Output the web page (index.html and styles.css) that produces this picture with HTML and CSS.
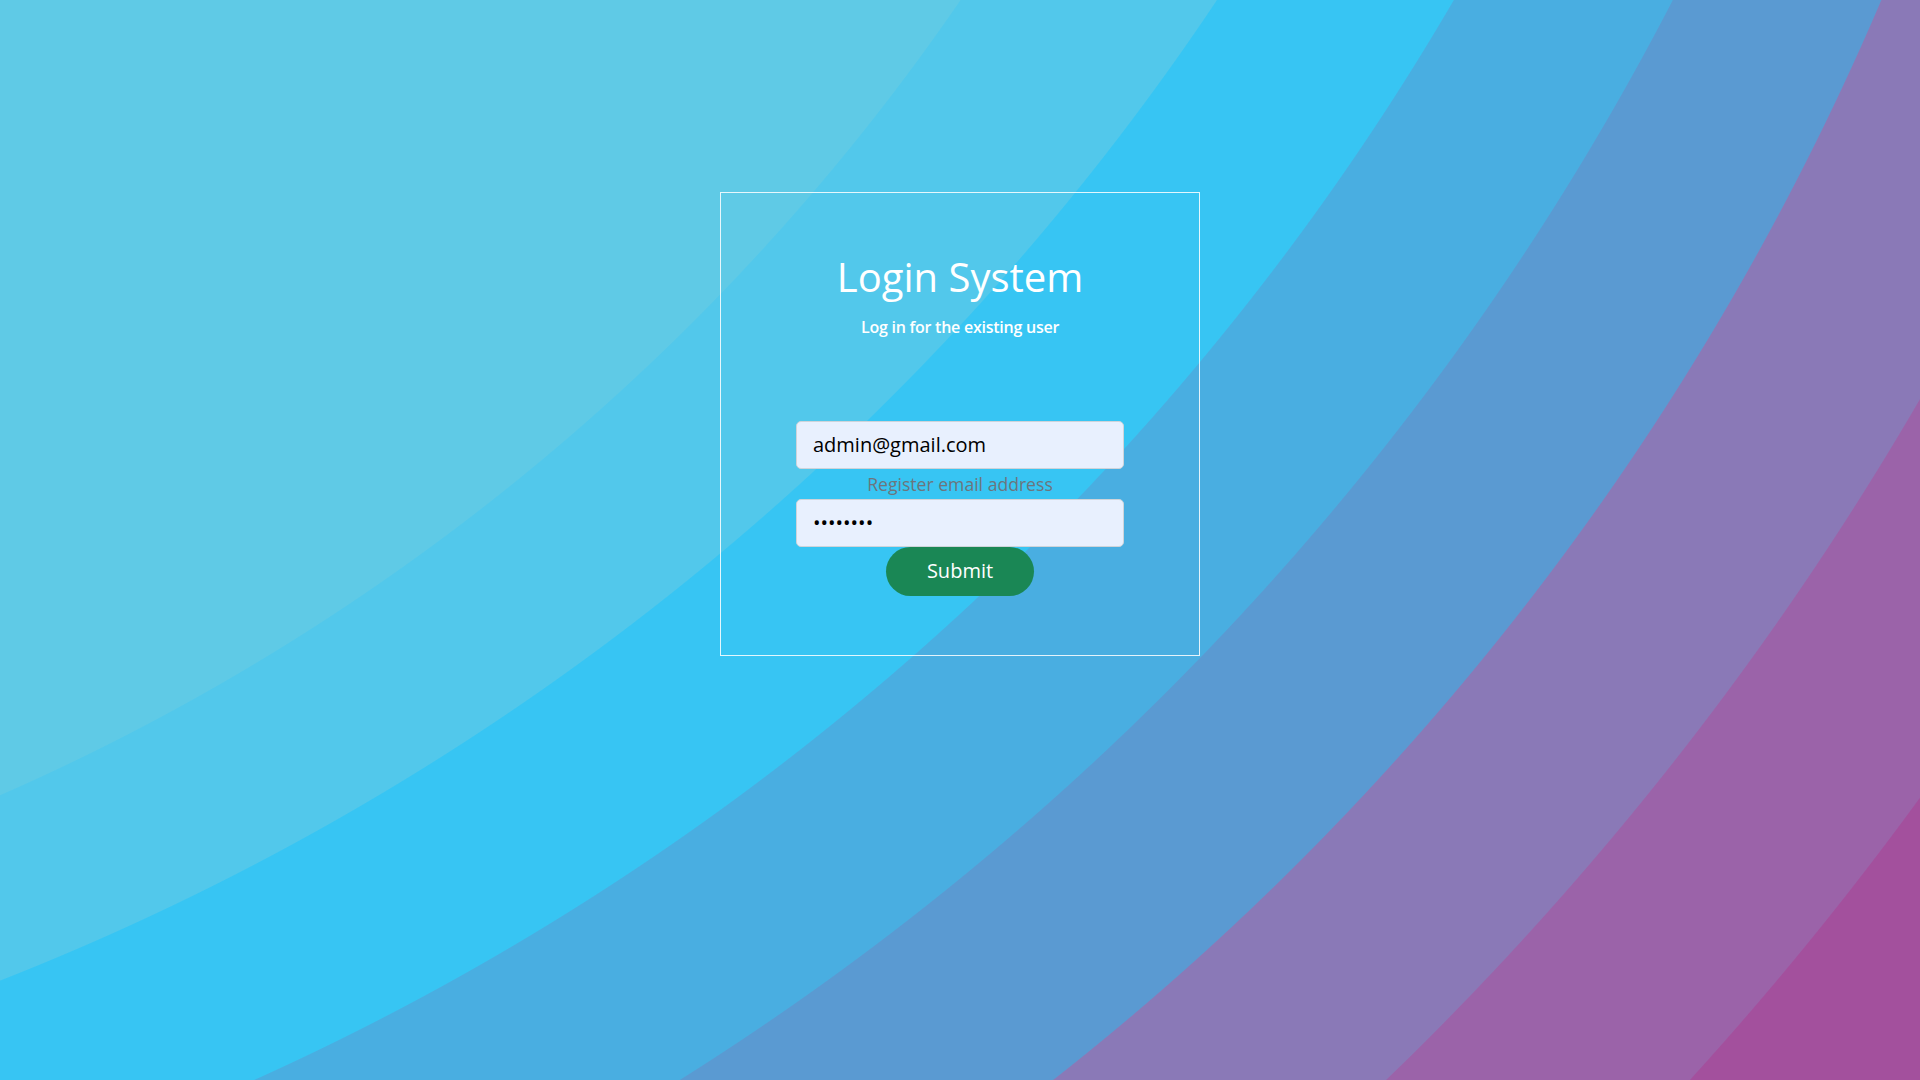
FILE: index.html
```html
<!DOCTYPE html>
<html lang="en">
<head>
<meta charset="utf-8">
<title>Login System</title>
<link rel="stylesheet" href="styles.css">
</head>
<body>
<div class="page">
  <div class="card">
    <h1 class="title">Login System</h1>
    <p class="subtitle">Log in for the existing user</p>
    <form class="form">
      <input class="field" type="email" value="admin@gmail.com">
      <small class="hint">Register email address</small>
      <input class="field" type="password" value="12345678">
      <button class="submit" type="button">Submit</button>
    </form>
  </div>
</div>
</body>
</html>
```
FILE: styles.css
```css
html, body {
  margin: 0;
  padding: 0;
}
body {
  font-family: "Open Sans", "Noto Sans", sans-serif;
  color: #212529;
}
.page {
  min-height: 100vh;
  box-sizing: border-box;
  padding-top: 192px;
  background-color: #a3509d;
  background-image:
    radial-gradient(circle 2271px at -912px -1284px, #5fcae6 2270px, rgba(95,202,230,0) 2271px),
    radial-gradient(circle 2612px at -955px -1450px, #52c8eb 2611px, rgba(82,200,235,0) 2612px),
    radial-gradient(circle 2648px at -833px -1334px, #37c5f3 2647px, rgba(55,197,243,0) 2648px),
    radial-gradient(circle 2789px at -804px -1281px, #49aee1 2788px, rgba(73,174,225,0) 2789px),
    radial-gradient(circle 2737px at -636px -1073px, #5a9ad2 2736px, rgba(90,154,210,0) 2737px),
    radial-gradient(circle 3130px at -786px -1173px, #8a79b7 3129px, rgba(138,121,183,0) 3130px),
    radial-gradient(circle 3348px at -786px -1173px, #9b63a9 3347px, rgba(155,99,169,0) 3348px);
  background-repeat: no-repeat;
}
.card {
  width: 480px;
  box-sizing: border-box;
  margin: 0 auto;
  border: 1px solid rgba(255, 255, 255, 0.85);
  padding: 60px 75px 59px;
  text-align: center;
}
.title {
  margin: 0;
  font-size: 40px;
  font-weight: 400;
  line-height: 48px;
  color: #fff;
}
.subtitle {
  margin: 14px 0 0;
  font-size: 16px;
  font-weight: 600;
  line-height: 24px;
  color: #fff;
  letter-spacing: -0.25px;
}
.form {
  margin-top: 81.5px;
  display: flex;
  flex-direction: column;
  align-items: center;
}
.field {
  display: block;
  width: 100%;
  height: 48px;
  box-sizing: border-box;
  padding: 8px 16px;
  font-family: "Open Sans", "Noto Sans", sans-serif;
  font-size: 20px;
  line-height: 30px;
  color: #000;
  background: #e8f0fe;
  border: 1px solid #ced4da;
  border-radius: 5px;
  outline: none;
}
.hint {
  display: block;
  font-size: 17.6px;
  line-height: 30px;
  color: #6c757d;
}
.submit {
  margin-top: 0;
  padding: 9.5px 41px;
  font-family: "Open Sans", "Noto Sans", sans-serif;
  font-size: 20px;
  line-height: 30px;
  color: #fff;
  background: #1a8755;
  border: 0;
  border-radius: 25px;
  cursor: pointer;
}
```
